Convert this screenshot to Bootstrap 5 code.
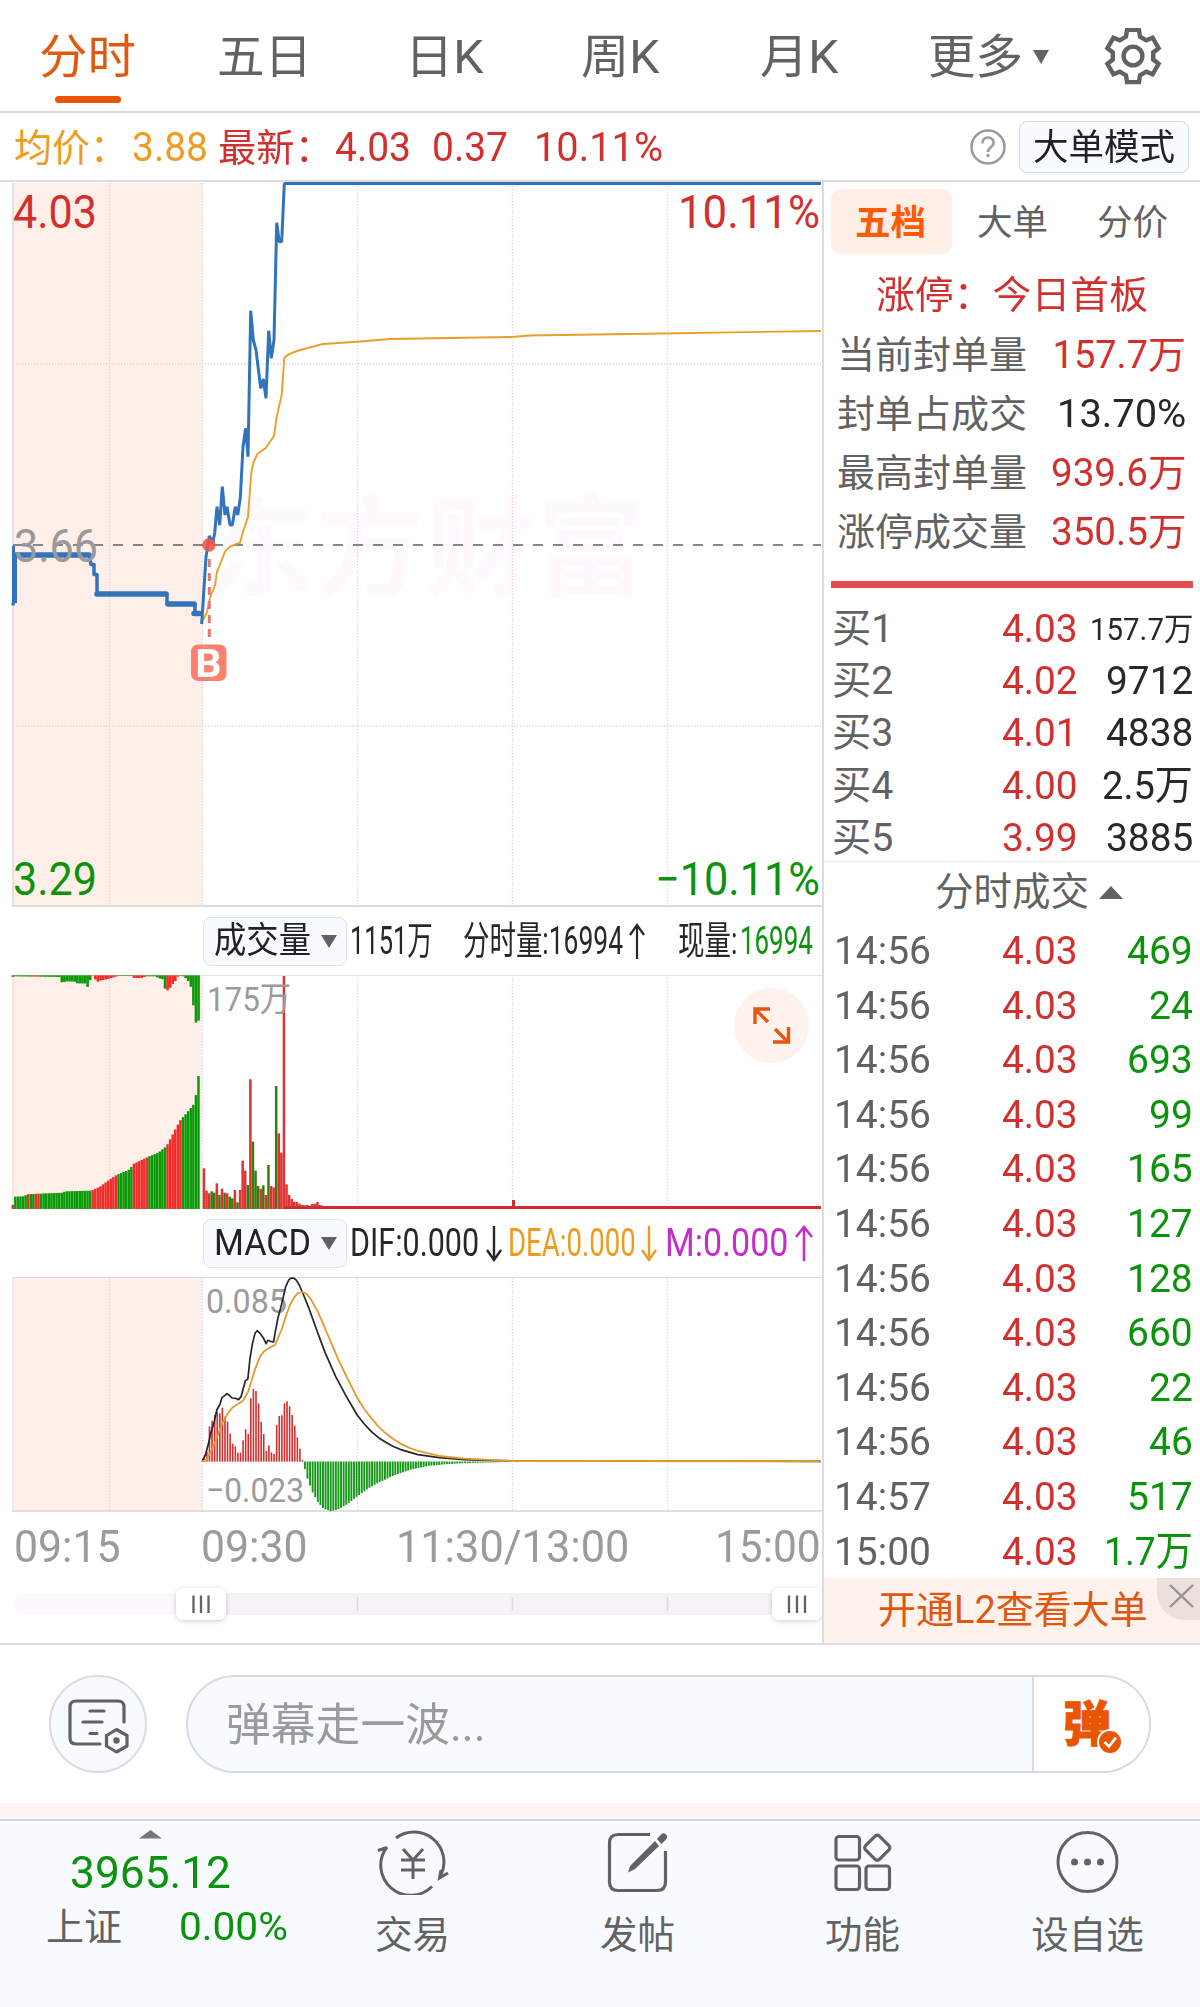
<!DOCTYPE html>
<html lang="zh-CN">
<head>
<meta charset="utf-8">
<meta name="viewport" content="width=device-width, initial-scale=1">
<title>分时</title>
<link rel="stylesheet" href="https://cdn.jsdelivr.net/npm/bootstrap@5.3.0/dist/css/bootstrap.min.css">
<style>
:root{--up:#d2302f;--down:#0c930c;--ink:#282828;--gray:#626262;--soft:#9c9a9b;--brand:#ea5504;--panel:#f7faff;--rule:#dcdce0}
body{width:1200px;height:2007px;overflow:hidden;background:#fff;color:var(--gray);font-family:Roboto,"Noto Sans CJK SC",sans-serif;line-height:1}
svg{display:block}
svg text{font-family:Roboto,"Noto Sans CJK SC",sans-serif}
.fit{display:inline-block;white-space:nowrap;transform-origin:0 50%}
.up{color:var(--up)}.down{color:var(--down)}.ink{color:var(--ink)}.brand{color:var(--brand)}
.tabs-top{display:grid;grid-template-columns:178px 188px 176px 179px 168px 105px 71px 60px;padding:2px 0 0 39px;height:113px;border-bottom:2px solid var(--rule);align-items:center;font-size:47px}
.tabs-top .tab-on{position:relative;color:#e0590f}
.tabs-top .tab-on::after{content:"";position:absolute;left:16px;top:63px;width:66px;height:7px;border-radius:4px;background:var(--brand)}
.quote{display:grid;grid-template-columns:118px 86px 117px 97px 102px 435px 50px 170px;padding:2px 0 0 14px;height:69px;border-bottom:2px solid var(--rule);align-items:center;font-size:38px}
.quote .num{font-size:41px}
.avg{color:#ed9c20}
.diff-m{color:#c52fc9}
.mode-btn{height:52px;background:var(--panel);border:1px solid #d6dae2;border-radius:8px;padding:0 0 0 13px;font-size:36px;line-height:52px;color:#222;margin-top:-2px}
.main-area{height:1463px;border-bottom:2px solid var(--rule)}
.left-col{width:822px}
.right-col{width:378px;border-left:2px solid var(--rule)}
.sub-head{height:68px;padding-left:203px;display:grid;align-items:center;font-size:39px;color:var(--ink)}
.vol-head{grid-template-columns:147px 113px 166px 49px 62px auto}
.macd-head{grid-template-columns:147px 136px 22px 133px 24px 130px auto}
.pick{width:144px;height:49px;background:var(--panel);border:1px solid #dfe3ee;border-radius:8px;padding-left:10px;font-size:36px;color:#222}
.pick svg{margin-left:10px}
.axis{height:67px;padding-left:14px;padding-top:12px;display:grid;grid-template-columns:187px 195px 319px auto;font-size:44px;color:var(--soft)}
.side-tabs{padding:7px 0 0 7px;display:grid;grid-template-columns:121px 25px 120px auto;height:73px;font-size:35.5px;line-height:69px}
.side-tabs .pill{background:#ffeee6;border-radius:10px;height:65px;color:#ff5a05;font-weight:700;padding-left:24px}
.limit{height:71px;padding-left:52px;font-size:38px;line-height:81px}
.stat{height:59px;padding:0 14px 0 13px;font-size:38px;line-height:59px}
.force{height:7px;margin:19px 7px 0 7px;background:#e54d4d}
.lv{display:grid;grid-template-columns:170px 74px 1fr;padding:0 7px 0 8px;height:52.2px;line-height:52px;font-size:39.3px}
.lv>:last-child{text-align:right}
.lv .sm{font-size:32px}
.levels{padding-top:15px;height:274px;border-bottom:1px solid #ececec}
.deals-title{height:61px;padding-left:111px;font-size:38.5px}
.deal{height:54.6px;line-height:56px;padding-left:10px;grid-template-columns:168px 74px 1fr}
.promo{height:65px;background:#fff1ec;position:relative;padding-left:54px;font-size:38px;line-height:65px;color:#de5810}
.promo .shut{position:absolute;right:0;top:0;width:43px;height:42px;background:#ece0dc;border-bottom-left-radius:27px}
.say{height:158px;padding:30px 0 0 49px}
.say .round{width:98px;height:98px;border:2px solid #dcdae0;border-radius:50%;background:var(--panel);margin-right:39px}
.say .field{width:965px;height:98px;border:2px solid #d9dae0;border-radius:49px;background:var(--panel);overflow:hidden;color:var(--soft);font-size:45.5px;line-height:98px;padding-left:38px}
.say .send{width:117px;height:98px;margin-top:-1px;border-left:2px solid #dcdce4;background:#fff}
.gap-strip{height:16px;background:#fff5f5}
.foot{height:188px;border-top:2px solid #d5d7dc;background:var(--panel)}
.foot .idx{width:300px;padding-top:9px}
.foot .item{width:225px;padding-top:8px;font-size:37.5px;text-align:center}
.foot .item svg{margin:0 auto 22px}
.foot .idx-val{font-size:44px;padding-left:70px;height:64px;line-height:68px}
.foot .idx-row{display:grid;grid-template-columns:133px auto;padding-left:46px;font-size:38px;line-height:48px}
</style>
<script src="https://cdn.jsdelivr.net/npm/bootstrap@5.3.0/dist/js/bootstrap.bundle.min.js"></script>
</head>
<body>
<nav class="tabs-top">
  <span class="tab-on"><span class="fit" data-w="97">分时</span></span>
  <span><span class="fit" data-w="95">五日</span></span>
  <span><span class="fit" data-w="79">日K</span></span>
  <span><span class="fit" data-w="79">周K</span></span>
  <span><span class="fit" data-w="79">月K</span></span>
  <span><span class="fit" data-w="95">更多</span></span>
  <svg width="16" height="14"><path d="M0 0H16L8 14Z" fill="#626262"/></svg>
  <svg width="58" height="58" viewBox="-29 -28 58 58" fill="none" stroke="#626262" stroke-width="4.4"><path id="gear"/><circle r="9.4"/></svg>
</nav>
<section class="quote">
  <span class="avg"><span class="fit" data-w="114">均价：</span></span>
  <span class="avg num"><span class="fit" data-w="76">3.88</span></span>
  <span class="up"><span class="fit" data-w="115">最新：</span></span>
  <span class="up num"><span class="fit" data-w="76">4.03</span></span>
  <span class="up num"><span class="fit" data-w="76">0.37</span></span>
  <span class="up num"><span class="fit" data-w="129">10.11%</span></span>
  <svg width="38" height="38" viewBox="0 1 38 38" fill="none" stroke="#9b9b9b"><circle cx="19" cy="19" r="16.5" stroke-width="2.5"/><path d="M13.3 15.5C13.3 7.500 24.700 7.500 24.700 15C24.700 19 19 19 19 24" stroke-width="2.600"/><circle cx="19" cy="27.500" r="1.300" fill="#9b9b9b"/></svg>
  <button class="mode-btn text-start"><span class="fit" data-w="142">大单模式</span></button>
</section>
<main class="main-area d-flex">
  <div class="left-col">
    <svg width="822" height="725" viewBox="0 182 822 725">
      <rect x="13" y="183" width="189.500" height="724" fill="#ffefe8"/>
      <text x="205" y="587" font-size="108" font-weight="700" fill="#fdf9fd" textLength="440">东方财富</text>
      <g stroke="#d9d6d9" stroke-width="1.300" stroke-dasharray="1.300 1.700"><path d="M109.500 183V907M202.500 183V907M357.500 183V907M512.500 183V907M667.500 183V907M13 364H821M13 726H821"/></g>
      <path d="M13 183V907" stroke="#dcdadd" stroke-width="1.500"/><path d="M12 906H822" stroke="#dcdadb" stroke-width="2"/>
      <path d="M13 545H821" stroke="#858585" stroke-width="2" stroke-dasharray="10 10"/>
      <g fill="none" stroke="#3173bd" stroke-linejoin="round">
        <path d="M13.500 604V546M15.500 603V554" stroke-width="3"/>
        <path d="M16 555H89M97 594H166M168 604H194M194 613.500H199.500" stroke-width="5.500" stroke-linecap="round"/>
        <path d="M89 555L91 564.500H94V574.500H97V594M167 594V604M195 604V613M13 604h.1M91 564.500h.1M94 574.500h.1" stroke-width="3.500" stroke-linecap="round"/>
      </g>
      <path fill="none" stroke="#e9a02a" stroke-width="1.900" stroke-linejoin="round" d="M203 620L207 612L210 598L215 585L217 571.700L220.700 563L225 551.700L230 546.700L240 542.700L242.700 533L248 516.700L250 490L251.300 473L253.300 463L257.300 454L266 447.700L270 441.700L274 436L276.700 416.700L281.700 395L284.300 358Q287 354 300 350L323 344L357 341.700L390 339L512 337L530 335.500L660 333.500L821 331"/>
      <path fill="none" stroke="#3173bd" stroke-width="3" stroke-linejoin="bevel" d="M201.700 624L206 557L209.300 536L212.700 543L214.700 533L217 506.700L219.700 525L222.300 486.700L225 515L227 506.700L230 525H232.300L235.300 506.700L237.700 515L240.300 498L243 446.700L245.700 428.300L248 456.700L250.700 310.700L253.300 340L256 350L260.700 388.300L263.300 379L266 398.300L268.700 330.700L271.300 358.300L274 340L276.700 222.700L279.300 241.700H281.700L284.300 183.500H821"/>
      <path d="M209.300 559V637" stroke="#e87770" stroke-width="3" stroke-dasharray="8 6"/><circle cx="209" cy="545" r="6.700" fill="#f25048" fill-opacity=".88"/>
      <rect x="191" y="644.500" width="35.500" height="36.500" rx="7" fill="#ff7f70"/><text x="195.500" y="676.500" font-size="38" font-weight="700" fill="#fff" textLength="26" lengthAdjust="spacingAndGlyphs">B</text>
      <g font-size="45.500">
        <text x="13" y="228" fill="#d2302f" textLength="84" lengthAdjust="spacingAndGlyphs">4.03</text><text x="678" y="228" fill="#d2302f" textLength="142" lengthAdjust="spacingAndGlyphs">10.11%</text>
        <text x="14" y="562" fill="#999" textLength="84" lengthAdjust="spacingAndGlyphs">3.66</text>
        <text x="13" y="895" fill="#0c930c" textLength="84" lengthAdjust="spacingAndGlyphs">3.29</text><text x="655" y="895" fill="#0c930c" textLength="165" lengthAdjust="spacingAndGlyphs">−10.11%</text>
      </g>
    </svg>
    <div class="sub-head vol-head">
      <div class="pick d-flex align-items-center"><span class="fit" data-w="97">成交量</span><svg width="16" height="13"><path d="M0 0H16L8 13Z" fill="#626262"/></svg></div>
      <span><span class="fit" data-w="83">1151万</span></span>
      <span><span class="fit" data-w="160">分时量:16994</span></span>
      <svg width="16" height="37" viewBox="0 0 16 37" fill="none" stroke="#282828" stroke-width="2.200"><path d="M8 36V2M1 12L8 2L15 12"/></svg>
      <span><span class="fit" data-w="59">现量:</span></span>
      <span class="down"><span class="fit" data-w="73">16994</span></span>
    </div>
    <svg width="822" height="234" viewBox="0 975 822 234">
      <rect x="13" y="975" width="189" height="233" fill="#ffefe8"/>
      <path d="M109.500 975V1208M202.500 975V1208M357.500 975V1208M512.500 975V1208M667.500 975V1208" stroke="#d9d6d9" stroke-width="1.300" stroke-dasharray="1.300 1.700"/>
      <path d="M12 975.500H822" stroke="#e3e1e4"/><path d="M13 975V1208" stroke="#dcdadd"/>
      <g id="vol"></g>
      <path d="M284 1207.500H821" stroke="#d02c2c" stroke-width="3"/><path d="M513.500 1200V1208" stroke="#d02c2c" stroke-width="3"/>
      <text x="207" y="1011" font-size="34" fill="#9c9a9b" textLength="84" lengthAdjust="spacingAndGlyphs">175万</text>
      <circle cx="771.500" cy="1025.500" r="37.500" fill="#fff1ec"/><path d="M770 1009H755V1024M755 1009L768 1022M773 1042H788.500V1027M788 1042L775 1029" fill="none" stroke="#e4580e" stroke-width="3.400"/>
    </svg>
    <div class="sub-head macd-head">
      <div class="pick d-flex align-items-center"><span class="fit" data-w="97">MACD</span><svg width="16" height="13"><path d="M0 0H16L8 13Z" fill="#626262"/></svg></div>
      <span><span class="fit" data-w="129">DIF:0.000</span></span>
      <svg width="16" height="37" viewBox="0 0 16 37" fill="none" stroke="#282828" stroke-width="2.400"><path d="M8 1V35M1 25L8 35L15 25"/></svg>
      <span class="avg"><span class="fit" data-w="128">DEA:0.000</span></span>
      <svg width="16" height="37" viewBox="0 0 16 37" fill="none" stroke="#ed9c20" stroke-width="2.400"><path d="M8 1V35M1 25L8 35L15 25"/></svg>
      <span class="diff-m"><span class="fit" data-w="123">M:0.000</span></span>
      <svg width="18" height="37" viewBox="0 0 18 37" fill="none" stroke="#c52fc9" stroke-width="2.600"><path d="M9 36V2M1 12L9 2L17 12"/></svg>
    </div>
    <svg width="822" height="236" viewBox="0 1277 822 236">
      <rect x="13" y="1278" width="189" height="233" fill="#ffefe8"/>
      <path d="M109.500 1278V1511M202.500 1278V1511M357.500 1278V1511M512.500 1278V1511M667.500 1278V1511" stroke="#d9d6d9" stroke-width="1.300" stroke-dasharray="1.300 1.700"/>
      <path d="M12 1277.500H822M13 1277V1511" stroke="#dedce0"/><path d="M12 1511H822" stroke="#e0dee1" stroke-width="2"/>
      <g font-size="34" fill="#9c9a9b"><text x="206" y="1312.500" textLength="81" lengthAdjust="spacingAndGlyphs">0.085</text><text x="206" y="1501.500" textLength="98" lengthAdjust="spacingAndGlyphs">−0.023</text></g>
      <g id="macd"></g>
      <g transform="translate(0 1265) scale(.35714 .33333)" fill="none" stroke-linejoin="round">
        <polyline vector-effect="non-scaling-stroke" stroke="#262626" stroke-width="1.700" points="566,589 575,570 584,535 590,505 600,470 607,435 615,420 622,397 630,391 635,386 642,391 650,399 660,400 668,404 675,395 687,347 694,342 700,280 707,235 714,205 720,197 728,205 738,220 745,236 750,226 757,229 766,231 770,205 778,160 788,120 800,65 808,46 813,40 818,39 824,40 830,46 838,60 850,90 865,130 885,190 910,262 940,335 970,395 1000,450 1020,477 1040,500 1060,518 1080,532 1100,544 1120,553 1170,569 1230,578 1300,584 1434,588 2298,589"/>
        <polyline vector-effect="non-scaling-stroke" stroke="#e39a2b" stroke-width="1.800" points="566,589 578,585 590,560 605,525 620,480 635,450 650,428 665,418 680,408 695,380 705,345 715,310 728,275 740,258 755,248 770,240 780,215 790,190 800,155 812,120 825,95 835,84 846,81 858,86 870,102 890,140 920,215 950,290 975,345 1000,398 1020,432 1040,460 1060,485 1080,505 1100,521 1120,535 1145,548 1170,558 1230,573 1300,581 1434,588 2298,589"/>
      </g>
    </svg>
    <div class="axis">
      <span><span class="fit" data-w="107">09:15</span></span><span><span class="fit" data-w="107">09:30</span></span><span><span class="fit" data-w="233">11:30/13:00</span></span><span><span class="fit" data-w="106">15:00</span></span>
    </div>
    <svg width="822" height="50" viewBox="0 1580 822 50">
      <defs><filter id="sh" x="-30%" y="-40%" width="160%" height="180%"><feDropShadow dx="0" dy="1" stdDeviation="2.500" flood-opacity=".2"/></filter></defs>
      <rect x="14" y="1593" width="190" height="22" rx="11" fill="#fcf9fd"/><rect x="200" y="1593" width="590" height="22" fill="#f6f2f6"/>
      <path d="M357.500 1597V1611M512.500 1597V1611M667.500 1597V1611" stroke="#dcd9de" stroke-width="1.500"/>
      <g fill="#fff" filter="url(#sh)"><rect x="176" y="1588" width="50" height="32" rx="8"/><rect x="772" y="1588" width="50" height="32" rx="8"/></g>
      <path d="M193.500 1595.500V1613M201 1595.500V1613M208.500 1595.500V1613M789 1595.500V1613M797 1595.500V1613M805 1595.500V1613" stroke="#626262" stroke-width="2.300"/>
    </svg>
  </div>
  <aside class="right-col">
    <div class="side-tabs"><span class="pill"><span class="fit" data-w="71">五档</span></span><i></i><span><span class="fit" data-w="71">大单</span></span><span><span class="fit" data-w="71">分价</span></span></div>
    <div class="limit up"><span class="fit" data-w="272">涨停：今日首板</span></div>
    <div class="stat d-flex justify-content-between"><span class="fit" data-w="190">当前封单量</span><span class="up"><span class="fit" data-w="133">157.7万</span></span></div>
    <div class="stat d-flex justify-content-between"><span class="fit" data-w="190">封单占成交</span><span class="ink"><span class="fit" data-w="129">13.70%</span></span></div>
    <div class="stat d-flex justify-content-between"><span class="fit" data-w="190">最高封单量</span><span class="up"><span class="fit" data-w="135">939.6万</span></span></div>
    <div class="stat d-flex justify-content-between"><span class="fit" data-w="190">涨停成交量</span><span class="up"><span class="fit" data-w="135">350.5万</span></span></div>
    <div class="force"></div>
    <div class="levels" id="levels"></div>
    <div class="deals-title d-flex align-items-center"><span class="fit" data-w="154">分时成交</span><svg width="24" height="14"></svg></div>
    <div id="deals"></div>
    <div class="promo"><span class="fit" data-w="270">开通L2查看大单</span><div class="shut"><svg width="43" height="42" viewBox="0 0 43 42" stroke="#93908f" stroke-width="2.400"><path d="M13 7L36 29M36 7L13 29"/></svg></div></div>
  </aside>
</main>
<section class="say d-flex">
  <div class="round"><svg width="94" height="94" viewBox="52 1677 94 94" fill="none" stroke="#626262" stroke-width="3.200" stroke-linecap="round"><path d="M101 1744H77Q71 1744 71 1738V1707Q71 1701 77 1701H119Q125 1701 125 1707V1722M91 1711H105M84 1722H103M91 1733.500H98"/><path d="M117.500 1729.500L128 1735.500V1746L117.500 1752L107.500 1746V1735.500Z" stroke-linejoin="round"/><circle cx="117.500" cy="1740.500" r="2.200" fill="#626262" stroke-width="2"/></svg></div>
  <div class="field d-flex justify-content-between"><span><span class="fit" data-w="260">弹幕走一波...</span></span>
    <div class="send"><svg width="115" height="96" viewBox="1034 1676 115 96"><text x="1063" y="1741" font-size="48" font-weight="900" fill="#ea5504" stroke="#ea5504" stroke-width="1">弹</text><circle cx="1110" cy="1742" r="13" fill="#fff"/><circle cx="1110" cy="1742" r="11" fill="#ea5504"/><path d="M1104.500 1742L1109 1746.500L1116 1737.500" fill="none" stroke="#fff" stroke-width="2.800"/></svg></div></div>
</section>
<div class="gap-strip"></div>
<footer class="foot d-flex">
  <div class="idx"><svg width="300" height="9"><path d="M139 8.500H162L150.500 0Z" fill="#77777b"/></svg>
    <div class="idx-val down"><span class="fit" data-w="161">3965.12</span></div>
    <div class="idx-row"><span><span class="fit" data-w="76">上证</span></span><span class="down"><span class="fit" data-w="109">0.00%</span></span></div></div>
  <div class="item"><svg width="76" height="66" viewBox="374 1829 76 66" fill="none" stroke="#626262" stroke-width="3"><path d="M395 1838A30 30 0 0 1 440 1875M377 1850.500L386 1847.500M386 1847A30 30 0 0 0 431 1886.500M447 1873L438.500 1878L440 1870M402 1849L412 1860L422 1849M400 1860H424M400 1870H424M412 1860V1879"/></svg><span>交易</span></div>
  <div class="item"><svg width="76" height="66" viewBox="600 1829 76 66" fill="none" stroke="#626262" stroke-width="3.200"><path d="M650 1834.500H618Q609.500 1834.500 609.500 1843V1882Q609.500 1890.500 618 1890.500H657Q665.500 1890.500 665.500 1882V1851"/><path d="M655 1841L659 1846L635 1869L628 1872.500L630 1866ZM657 1839L661 1834.500Q664 1832 666.500 1835Q668 1837 665.500 1840L661.500 1844Z" fill="#626262" stroke="none"/></svg><span>发帖</span></div>
  <div class="item"><svg width="76" height="66" viewBox="825 1829 76 66" fill="none" stroke="#626262" stroke-width="3.200"><rect x="836" y="1836.500" width="23.500" height="23.500" rx="3"/><rect x="836" y="1866" width="23.500" height="23.500" rx="3"/><rect x="866" y="1866" width="23.500" height="23.500" rx="3"/><rect x="867.500" y="1838" width="19.500" height="19.500" rx="3" transform="rotate(45 877.250 1847.750)"/></svg><span>功能</span></div>
  <div class="item"><svg width="76" height="66" viewBox="1050 1829 76 66"><circle cx="1087.500" cy="1862" r="29.500" fill="none" stroke="#626262" stroke-width="3"/><g fill="#626262"><circle cx="1074.500" cy="1862" r="3.500"/><circle cx="1087.500" cy="1862" r="3.500"/><circle cx="1100.500" cy="1862" r="3.500"/></g></svg><span>设自选</span></div>
</footer>
<script>
// order book and trade list
document.querySelector('.deals-title svg').outerHTML='<svg style="margin-left:10px" width="24" height="14"><path d="M0 13H24L12 0Z" fill="#626262"/></svg>';
document.getElementById('levels').innerHTML=[['4.03','157.7万',103],['4.02','9712',87],['4.01','4838',87],['4.00','2.5万',91],['3.99','3885',87]].map((r,i)=>
 `<div class="lv"><span>买${i+1}</span><span class="up"><span class="fit" data-w="76">${r[0]}</span></span><span class="ink${i?'':' sm'}"><span class="fit" data-w="${r[2]}">${r[1]}</span></span></div>`).join('');
document.getElementById('deals').innerHTML=['469','24','693','99','165','127','128','660','22','46','517','1.7万'].map((v,i)=>
 `<div class="lv deal"><span><span class="fit" data-w="97">${i<10?'14:56':i<11?'14:57':'15:00'}</span></span><span class="up"><span class="fit" data-w="76">4.03</span></span><span class="down"><span class="fit" data-w="${i>10?89:v.length*21.8}">${v}</span></span></div>`).join('');
document.querySelectorAll('.fit').forEach(e=>{const n=e.offsetWidth,w=+e.dataset.w;e.style.transform=`scaleX(${w/n})`;e.style.marginRight=(w-n)+'px'});
// gear outline with six teeth
let g='';for(let k=0;k<6;k++){for(const [r,a] of [[20.5,-20],[26.8,-13],[26.8,13],[20.5,20]]){const t=(k*60-90+a)*Math.PI/180;g+=(g?'L':'M')+(r*Math.cos(t)).toFixed(1)+' '+(r*Math.sin(t)).toFixed(1)}}
document.getElementById('gear').setAttribute('d',g+'Z');
const lerp=(p,x)=>{for(let i=1;i<p.length;i++)if(x<=p[i][0]){const a=p[i-1],b=p[i];return a[1]+(b[1]-a[1])*(x-a[0])/(b[0]-a[0])}return p[p.length-1][1]};
const R='#f02b28',G='#0a9a08';
const bar=(x,y,w,h,c)=>`<rect x="${x.toFixed(2)}" y="${y.toFixed(2)}" width="${w}" height="${h.toFixed(2)}" fill="${c}"/>`;
// call auction volume
const prof=[[38,917],[42,890],[76,889],[78,883],[120,881],[190,878],[195,874],[275,872],[300,860],[330,838],[350,825],[390,808],[400,792],[450,768],[475,758],[500,738],[520,700],[540,662],[555,645],[580,615],[588,585],[595,528],[600,528]];
const seg=[[42,R],[78,G],[87,R],[103,G],[120,R],[278,G],[355,R],[398,G],[448,R],[500,G],[548,R],[610,G]];
const top_=[[38,231],[42,229],[178,231],[180,247],[192,247],[195,244],[225,245],[230,250],[260,251],[262,261],[270,261],[271,227],[285,227],[287,248],[300,242],[320,238],[345,231],[352,228],[398,228],[400,234],[425,234],[440,229],[465,229],[480,236],[489,238],[491,266],[498,266],[499,272],[506,270],[515,257],[523,245],[533,240],[534,227],[548,228],[562,238],[570,254],[578,275],[583,368],[591,368],[592,362],[600,362]];
const tseg=[[42,R],[100,G],[120,R],[272,G],[355,R],[398,G],[440,R],[498,G],[540,R],[610,G]];
const col=(s,x)=>s.find(q=>x<q[0])[1];
let h='';
for(let x=34.5;x<598;x+=7.74){const m=x+3.9,y=lerp(prof,m),t=lerp(top_,m);h+=bar(x/3,900+y/3,2.45,(927-y)/3,col(seg,m))+bar(x/3,975.3,2.6,(t-226)/3,col(tseg,m))}
// continuous trading volume
const v=[805,872,880,874,878,850,885,866,878,880,890,895,870,907,870,782,812,855,538,725,812,858,866,856,885,795,858,862,558,700,758,228,853,885,897,905,906,911,915,916,915,917,912,911,906,915,917];
const cs='rrrggrgrgrggrgrrrgrgggrgrgrrgrr';
v.forEach((y,i)=>h+=bar(202.700+i*2.58,900+y/3,2.5,(927-y)/3,i<cs.length&&cs[i]==='g'?'#377d0c':'#d33'));
document.getElementById('vol').innerHTML=h;
// MACD histogram
const red=[580,560,484,467,450,440,445,428,455,470,506,536,544,563,563,526,493,507,400,371,378,415,470,507,558,541,562,567,480,453,451,415,409,424,450,482,517,551,585];
h='';red.forEach((y,i)=>h+=bar(203.5+i*2.585,1265+y/3,1.6,(590-y)/3,'#d22f2f'));
const gp=[[853,612],[860,640],[875,683],[890,712],[905,730],[925,738],[945,733],[970,718],[1000,693],[1030,670],[1060,652],[1100,632],[1150,613],[1200,602],[1250,597],[1300,594],[1400,591]];
for(let x=853;x<1400;x+=7.23)h+=bar(x/2.8-.7,1461.500,1.900,(lerp(gp,x)-589)/3,'#159718');
document.getElementById('macd').innerHTML=h;
</script>
</body>
</html>
